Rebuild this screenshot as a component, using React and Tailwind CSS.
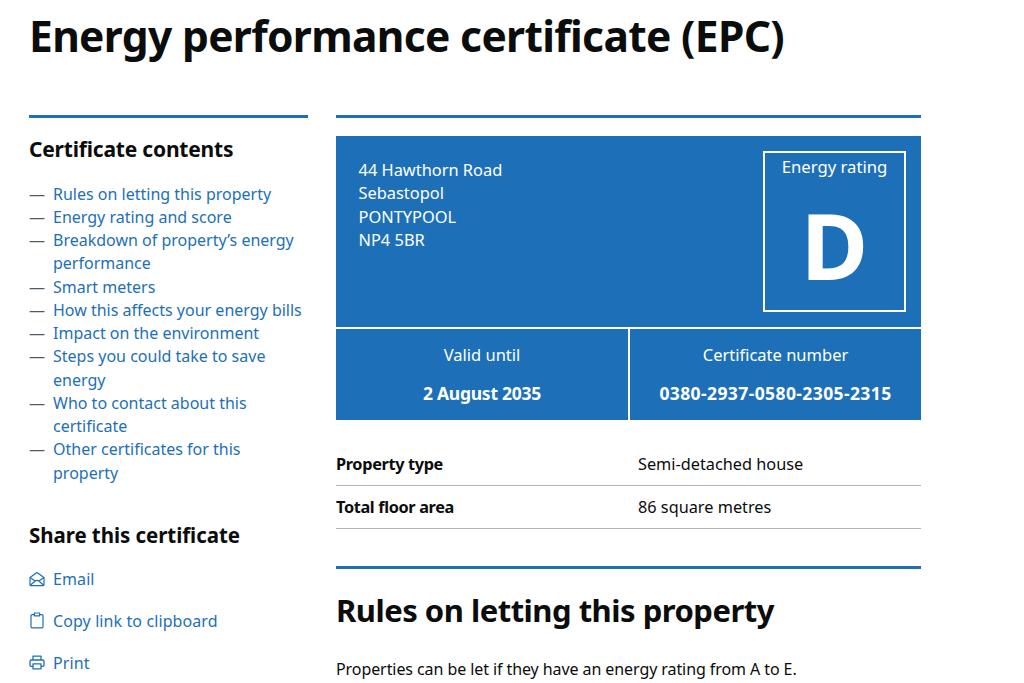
const nav = [
  "Rules on letting this property",
  "Energy rating and score",
  "Breakdown of property’s energy performance",
  "Smart meters",
  "How this affects your energy bills",
  "Impact on the environment",
  "Steps you could take to save energy",
  "Who to contact about this certificate",
  "Other certificates for this property",
];

function Mail() {
  return (
    <svg width="16" height="16" viewBox="0 0 16 16" fill="none" stroke="currentColor" strokeWidth="1.2" strokeLinejoin="round" className="-mt-[2px]">
      <path d="M1 6.5 8 1.6l7 4.9v7.2a.9.9 0 0 1-.9.9H1.9a.9.9 0 0 1-.9-.9z" />
      <path d="M1 6.5 6.2 10 1.3 14.2M15 6.5 9.8 10l4.9 4.2M6.2 10q1.8-1.2 3.6 0" />
    </svg>
  );
}
function Clip() {
  return (
    <svg width="14" height="17" viewBox="0 0 14 17" fill="none" stroke="currentColor" strokeWidth="1.2" strokeLinejoin="round" className="-mt-[2px] ml-px">
      <path d="M4.2 2.6H2a1 1 0 0 0-1 1v11.2a1 1 0 0 0 1 1h10a1 1 0 0 0 1-1V3.6a1 1 0 0 0-1-1H9.8" />
      <path d="M4.4 1h5.2v2.8H4.4z" />
    </svg>
  );
}
function Printer() {
  return (
    <svg width="16" height="15" viewBox="0 0 16 15" fill="none" stroke="currentColor" strokeWidth="1.3" strokeLinejoin="round" className="-mt-[2px]">
      <path d="M4 5V1.2h8V5" />
      <path d="M4 11.4H2.4A1.4 1.4 0 0 1 1 10V6.4A1.4 1.4 0 0 1 2.4 5h11.2A1.4 1.4 0 0 1 15 6.4V10a1.4 1.4 0 0 1-1.4 1.4H12" />
      <path d="M4 8.8h8v5H4z" />
    </svg>
  );
}

const share = [
  ["Email", <Mail />],
  ["Copy link to clipboard", <Clip />],
  ["Print", <Printer />],
];

export default function App() {
  return (
    <div className="h-[683px] w-[1024px] overflow-hidden bg-white pl-[29px] font-['Noto_Sans',sans-serif] text-[#0b0c0c]">
      <h1 className="pt-[9px] text-[42.5px] leading-[54px] font-bold tracking-[-0.66px]">
        Energy performance certificate (EPC)
      </h1>
      <div className="mt-[52px] flex w-[892px] gap-[28px]">
        <aside className="w-[279px] shrink-0 border-t-[3px] border-[#1d70b8] pt-[19px]">
          <h2 className="text-[21px] leading-[24px] font-bold tracking-[-0.2px]">Certificate contents</h2>
          <ul className="mt-[21.5px] text-[16px] leading-[23.25px]">
            {nav.map((t) => (
              <li key={t} className="flex">
                <span className="w-[24px] shrink-0 text-[#505a5f]">—</span>
                <a className="text-[#1d70b8]">{t}</a>
              </li>
            ))}
          </ul>
          <h2 className="mt-[38.5px] text-[20.5px] leading-[24px] font-bold tracking-[-0.06px]">Share this certificate</h2>
          <div className="mt-[21px] flex flex-col gap-[19px] text-[16px] leading-[23px] tracking-[0.1px] text-[#1d70b8]">
            {share.map(([t, icon]) => (
              <a key={t} className="flex items-center">
                <span className="flex w-[24px] shrink-0">{icon}</span>
                {t}
              </a>
            ))}
          </div>
        </aside>
        <main className="min-w-0 flex-1 border-t-[3px] border-[#1d70b8] pt-[18px]">
          <section className="bg-[#1d70b8] text-white">
            <div className="flex h-[193px] justify-between border-b-2 border-white pt-[15px] pr-[15px] pl-[22.5px]">
              <p className="pt-[7px] text-[16.4px] leading-[23.25px]">
                44 Hawthorn Road<br />Sebastopol<br />PONTYPOOL<br />NP4 5BR
              </p>
              <div className="flex h-[161px] w-[143px] flex-col items-center border-2 border-white">
                <span className="pt-[2px] text-[16.7px] leading-[23px]">Energy rating</span>
                <span className="mt-[32px] text-[92px] leading-[70px] font-bold">D</span>
              </div>
            </div>
            <div className="flex h-[91px] text-center">
              <div className="w-[294px] border-r-2 border-white pt-[14px]">
                <p className="text-[16.5px] leading-[24px]">Valid until</p>
                <p className="mt-[14px] text-[17.5px] leading-[24px] font-bold tracking-[-0.25px]">2 August 2035</p>
              </div>
              <div className="flex-1 pt-[14px]">
                <p className="text-[16.5px] leading-[24px]">Certificate number</p>
                <p className="mt-[14px] text-[17.5px] leading-[24px] font-bold tracking-[0.4px]">0380-2937-0580-2305-2315</p>
              </div>
            </div>
          </section>
          <dl className="mt-[23px] text-[16.3px] leading-[24px]">
            <div className="flex h-[43px] items-center border-b border-[#b1b4b6]">
              <dt className="w-[302px] font-bold tracking-[-0.35px]">Property type</dt>
              <dd>Semi-detached house</dd>
            </div>
            <div className="flex h-[43px] items-center border-b border-[#b1b4b6]">
              <dt className="w-[302px] font-bold tracking-[-0.35px]">Total floor area</dt>
              <dd>86 square metres</dd>
            </div>
          </dl>
          <div className="mt-[37px] border-t-[3px] border-[#1d70b8] pt-[21px]">
            <h2 className="text-[31px] leading-[40px] font-bold tracking-[-0.5px]">Rules on letting this property</h2>
            <p className="mt-[27px] text-[16px] leading-[24px] tracking-[-0.08px]">Properties can be let if they have an energy rating from A to E.</p>
          </div>
        </main>
      </div>
    </div>
  );
}
